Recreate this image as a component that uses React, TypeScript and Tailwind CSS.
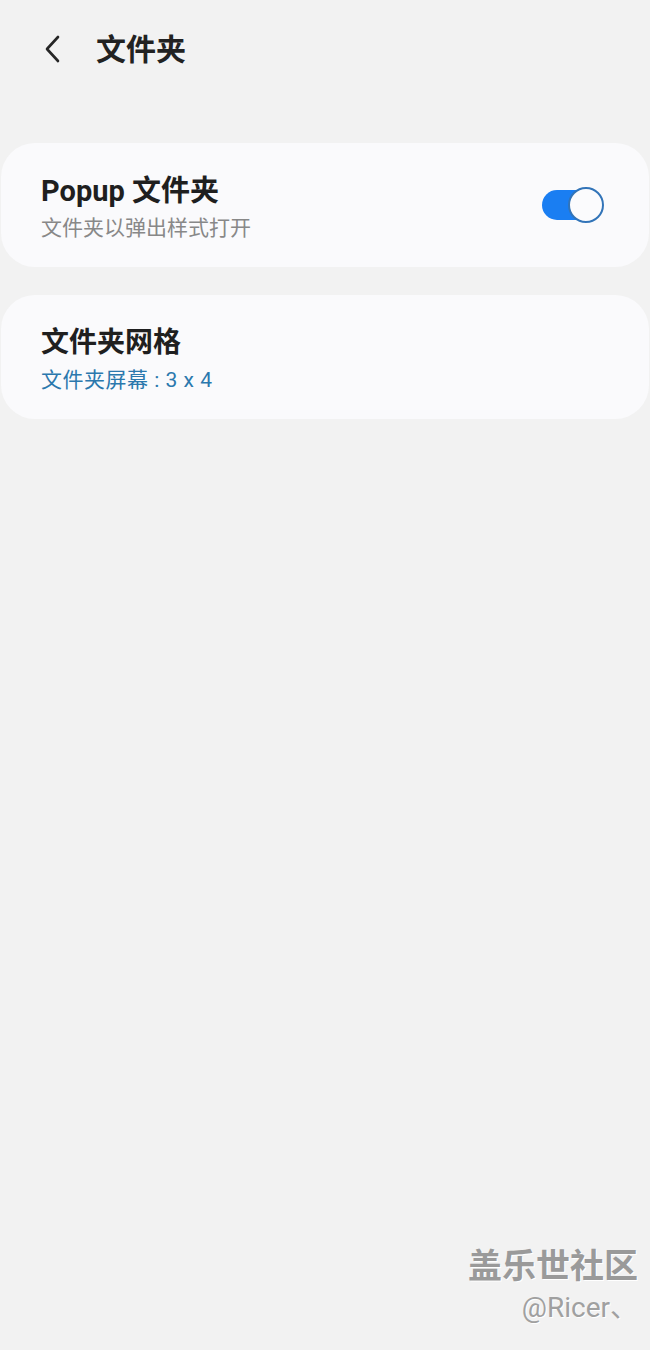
import React from 'react';

const font = { fontFamily: 'Roboto, "Noto Sans CJK SC", "Noto Sans", sans-serif' };

function Toggle() {
  return (
    <div className="relative w-[62px] h-[36px] flex items-center">
      <div className="h-[30px] w-[54px] rounded-full bg-[#1a7ef2]" />
      <div className="absolute right-0 top-0 h-[36px] w-[36px] rounded-full bg-[#fbfbfd] border-2 border-[#3274b8]" />
    </div>
  );
}

export default function App() {
  return (
    <div className="min-h-[1350px] w-[650px] bg-[#f2f2f2] relative" style={font}>
      <header className="flex items-center h-[100px] pl-[40px] pb-[2px]">
        <svg width="24" height="30" viewBox="0 0 24 30" fill="none" className="mr-[32px]">
          <path d="M18 3 L7 15 L18 27" stroke="#262626" strokeWidth="2.6" strokeLinecap="round" strokeLinejoin="round" />
        </svg>
        <h1 className="text-[30px] font-bold text-[#222]">文件夹</h1>
      </header>

      <div className="mt-[43px] flex flex-col gap-[28px] px-[1px]">
        <div className="h-[124px] rounded-[34px] bg-[#fafafc] flex items-center justify-between pl-[40px] pr-[45px]">
          <div className="flex flex-col pt-[6px]">
            <span className="text-[29px] font-bold text-[#1f1f1f] leading-[36px]">Popup 文件夹</span>
            <span className="text-[21px] text-[#888] leading-[30px] mt-[4px]">文件夹以弹出样式打开</span>
          </div>
          <Toggle />
        </div>

        <div className="h-[124px] rounded-[34px] bg-[#fafafc] flex flex-col justify-center pl-[40px] pt-[5px]">
          <span className="text-[28px] font-bold text-[#1f1f1f] leading-[36px]">文件夹网格</span>
          <span className="text-[21px] text-[#2b78ad] leading-[30px] mt-[4px] tracking-[0.5px]">文件夹屏幕 : 3 x 4</span>
        </div>
      </div>

      <div className="absolute right-[12px] top-[1244px] flex flex-col items-end pointer-events-none">
        <span className="text-[34px] font-bold text-[#9a9a9a] leading-[44px] [text-shadow:1px_1px_0_#ffffff]">盖乐世社区</span>
        <span className="text-[28px] text-[#a0a0a0] leading-[36px] mt-[2px] [text-shadow:1px_1px_0_#ffffff]">@Ricer、</span>
      </div>
    </div>
  );
}
